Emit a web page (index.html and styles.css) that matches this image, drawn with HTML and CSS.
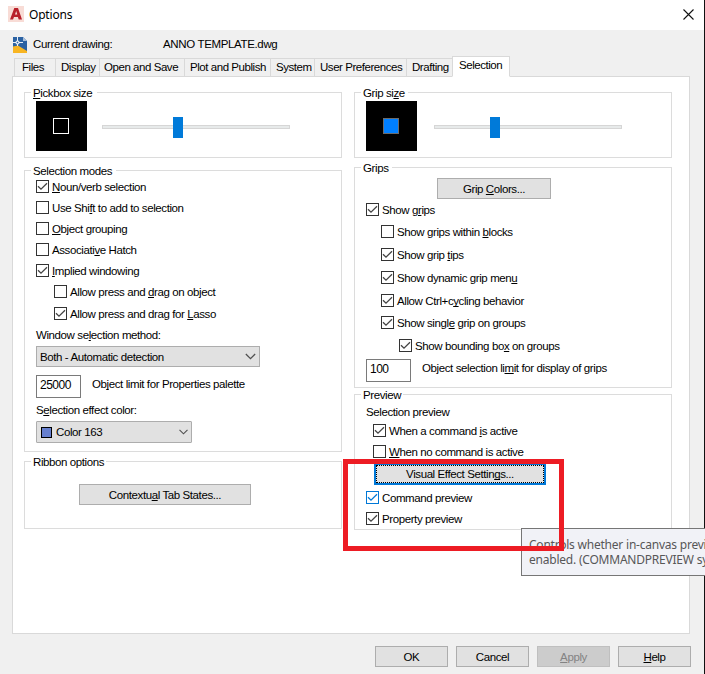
FILE: index.html
```html
<!DOCTYPE html>
<html lang="en">
<head>
<meta charset="utf-8">
<title>Options</title>
<link rel="stylesheet" href="styles.css">
</head>
<body>
<svg class="defs" width="0" height="0"><symbol id="tick" viewBox="0 0 11 11"><path d="M1 5.2 L4 8.2 L10 2.2" fill="none" stroke="currentColor" stroke-width="1.3"/></symbol><symbol id="chev" viewBox="0 0 9 6"><path d="M.5 .8 L4.5 4.8 L8.5 .8" fill="none" stroke="#505050" stroke-width="1.1"/></symbol></svg>
<div class="dialog">
  <header class="title">
    <svg class="app" width="16" height="16" viewBox="0 0 16 16"><rect width="16" height="16" fill="#f8dcd6"/><path d="M2 13.5 L6.3 2 H10 L14 13.5 H10.7 L9.9 11 H6 L5 13.5 Z M7 8.6 H9.3 L8.2 5Z" fill="#b81f2a" fill-rule="evenodd"/></svg>
    <span class="name">Options</span>
    <svg class="close" width="11" height="11" viewBox="0 0 11 11"><path d="M.5 .5 L10.5 10.5 M10.5 .5 L.5 10.5" stroke="#111" stroke-width="1.1"/></svg>
  </header>
  <div class="drawing">
    <svg width="14" height="16" viewBox="0 0 14 16"><path d="M0 0 H10 L14 4 V16 H0Z" fill="#2c62a3"/><path d="M10 0 L14 4 H10Z" fill="#a9c0db"/><path d="M0 9.5 L5 8.5 L14 14 V16 H0Z" fill="#f8b522"/><path d="M0 5.5 H10 M4.5 0 V9" stroke="#fff" stroke-width=".9"/><rect x="3.2" y="4.2" width="2.6" height="2.6" fill="#2c62a3" stroke="#fff" stroke-width=".8"/></svg>
    <span class="cur">Current drawing:</span><span class="file">ANNO TEMPLATE.dwg</span>
  </div>
  <nav class="tabs">
    <span class="tab t1">Files</span><span class="tab t2">Display</span><span class="tab t3">Open and Save</span><span class="tab t4">Plot and Publish</span><span class="tab t5">System</span><span class="tab t6">User Preferences</span><span class="tab t7">Drafting</span><span class="tab on">Selection</span>
  </nav>
  <main class="panel">
    <div class="col">
      <section class="group size">
        <div class="legend l-pick"><u>P</u>ickbox size</div>
        <div class="sizer"><div class="preview"><i class="pick"></i></div><div class="slider"><i class="thumb"></i></div></div>
      </section>
      <section class="group modes">
        <div class="legend l-modes">Selection modes</div>
        <label class="check"><i class="box"><svg><use href="#tick"/></svg></i><span><u>N</u>oun/verb selection</span></label>
        <label class="check"><i class="box"></i><span>Use Shi<u>f</u>t to add to selection</span></label>
        <label class="check"><i class="box"></i><span><u>O</u>bject grouping</span></label>
        <label class="check"><i class="box"></i><span>Associati<u>v</u>e Hatch</span></label>
        <label class="check"><i class="box"><svg><use href="#tick"/></svg></i><span><u>I</u>mplied windowing</span></label>
        <label class="check in18"><i class="box"></i><span>Allow press and <u>d</u>rag on object</span></label>
        <label class="check in18 gap1"><i class="box"><svg><use href="#tick"/></svg></i><span>Allow press and drag for <u>L</u>asso</span></label>
        <div class="text method">Window se<u>l</u>ection method:</div>
        <div class="select wide"><span>Both - Automatic detection</span><svg width="11" height="7"><use href="#chev"/></svg></div>
        <div class="field"><span class="input">25000</span><span class="flabel">Ob<u>j</u>ect limit for Properties palette</span></div>
        <div class="text effect">S<u>e</u>lection effect color:</div>
        <div class="select color"><i class="swatch"></i><span>Color 163</span><svg width="9" height="6"><use href="#chev"/></svg></div>
      </section>
      <section class="group ribbon">
        <div class="legend l-ribbon">Ribbon options</div>
        <div class="button states"><span>Contextu<u>a</u>l Tab States...</span></div>
      </section>
    </div>
    <div class="col">
      <section class="group size">
        <div class="legend l-gsize">Grip si<u>z</u>e</div>
        <div class="sizer right"><div class="preview"><i class="pick grip"></i></div><div class="slider"><i class="thumb"></i></div></div>
      </section>
      <section class="group grips">
        <div class="legend l-grips">Grips</div>
        <div class="button gcolors"><span>Grip <u>C</u>olors...</span></div>
        <label class="check h22"><i class="box"><svg><use href="#tick"/></svg></i><span>Show g<u>r</u>ips</span></label>
        <label class="check in15 h22"><i class="box"></i><span>Show grips within <u>b</u>locks</span></label>
        <label class="check in15 h23"><i class="box"><svg><use href="#tick"/></svg></i><span>Show grip <u>t</u>ips</span></label>
        <label class="check in15 h23"><i class="box"><svg><use href="#tick"/></svg></i><span>Show dynamic grip men<u>u</u></span></label>
        <label class="check in15 h23"><i class="box"><svg><use href="#tick"/></svg></i><span>Allow Ctrl+c<u>y</u>cling behavior</span></label>
        <label class="check in15 h22"><i class="box"><svg><use href="#tick"/></svg></i><span>Show singl<u>e</u> grip on groups</span></label>
        <label class="check in33 h23"><i class="box"><svg><use href="#tick"/></svg></i><span>Show bounding bo<u>x</u> on groups</span></label>
        <div class="field limit"><span class="input">100</span><span class="flabel">Object selection li<u>m</u>it for display of grips</span></div>
      </section>
      <section class="group prev">
        <div class="legend l-prev">Preview</div>
        <div class="text">Selection preview</div>
        <label class="check in7 first"><i class="box"><svg><use href="#tick"/></svg></i><span>When a command <u>i</u>s active</span></label>
        <label class="check in7"><i class="box"></i><span><u>W</u>hen no command is active</span></label>
        <div class="button focus"><span>Visual Effect Settin<u>g</u>s...</span></div>
        <label class="check hot"><i class="box"><svg><use href="#tick"/></svg></i><span>Command preview</span></label>
        <label class="check"><i class="box"><svg><use href="#tick"/></svg></i><span>Property preview</span></label>
      </section>
    </div>
  </main>
  <footer class="actions">
    <div class="button"><span>OK</span></div><div class="button"><span>Cancel</span></div><div class="button off"><span><u>A</u>pply</span></div><div class="button"><span><u>H</u>elp</span></div>
  </footer>
  <div class="tooltip">Controls whether in-canvas previe<br>enabled. (COMMANDPREVIEW sy</div>
  <div class="marker"></div>
</div>
</body>
</html>
```
FILE: styles.css
```css
* { box-sizing: border-box; }
body { margin: 0; overflow: hidden; font: 11.5px/14px "Liberation Sans", Arial, sans-serif; letter-spacing: -.4px; color: #000; }
.defs { position: absolute; }
svg { display: block; flex: none; }
u { text-underline-offset: 1px; text-decoration-thickness: 1px; text-decoration-skip-ink: none; }
.dialog { position: relative; width: 705px; height: 674px; overflow: hidden; background: linear-gradient(#111, #111) right / 1px 100% no-repeat #f0f0f0; white-space: nowrap; }
.title { width: 704px; height: 30px; background: #fff; display: flex; align-items: center; padding: 0 10px 0 8px; }
.title .name { margin-left: 5px; flex: 1; font: 12px/16px "Noto Sans", sans-serif; letter-spacing: -.2px; }
.title .app, .title .close { margin-top: -2px; }
.drawing { height: 26px; padding: 3px 0 0 13px; display: flex; align-items: center; }
.drawing span { margin-top: -2px; letter-spacing: -.35px; }
.drawing .cur { width: 130px; margin-left: 6px; }
.tabs { height: 21px; padding-left: 14px; display: flex; align-items: flex-end; position: relative; letter-spacing: -.45px; }
.tab { height: 19px; border: 1px solid #d9d9d9; border-right: 0; padding: 1px 0 0 5px; }
.t1 { width: 41px; padding-left: 7px; } .t2 { width: 44px; } .t3 { width: 85px; padding-left: 4px; } .t4 { width: 86px; } .t5 { width: 44px; } .t6 { width: 92px; } .t7 { width: 46px; }
.on { width: 58px; height: 21px; background: #fff; border-right: 1px solid #d9d9d9; border-bottom-color: #fff; padding-left: 6px; }
.panel { margin: -1px 0 0 12px; width: 678px; height: 558px; background: #fff; border: 1px solid #d9d9d9; padding: 15px 0 0 11px; display: flex; gap: 12px; }
.col { width: 318px; }
.group { border: 1px solid #dcdcdc; padding-left: 11px; }
.legend { height: 14px; margin: -7px 0 -7px -5px; padding-left: 2px; background: #fff; }
.l-pick { width: 66px; } .l-modes { width: 85px; } .l-ribbon { width: 75px; } .l-gsize { width: 47px; } .l-grips { width: 31px; } .l-prev { width: 42px; }
.size { height: 66px; }
.sizer { display: flex; align-items: center; padding-top: 8px; }
.preview { width: 51px; height: 50px; background: #000; display: flex; align-items: center; padding-left: 17px; }
.pick { width: 16px; height: 16px; border: 1px solid #fff; }
.grip { background: #007fff; border-color: #6b6b6b; }
.slider { width: 188px; height: 4px; margin: 2px 0 0 15px; border: 1px solid #d6d6d6; background: #e7eaea; display: flex; align-items: center; padding-left: 70px; }
.right .slider { margin-left: 17px; padding-left: 55px; }
.thumb { width: 10px; height: 21px; flex: none; background: #007ad9; }
.modes { margin-top: 12px; height: 282px; }
.modes .legend { margin-bottom: -2px; }
.check { display: flex; align-items: center; height: 21px; }
.check span { margin-top: 1px; }
.box { width: 13px; height: 13px; border: 1px solid #333; background: #fff; margin-right: 3px; color: #444; flex: none; }
.box svg { width: 11px; height: 11px; }
.in18 { margin-left: 18px; } .in15 { margin-left: 15px; } .in33 { margin-left: 33px; } .in7 { margin-left: 7px; }
.gap1 { margin-top: 1px; }
.h22 { height: 22px; } .h23 { height: 23px; }
.h22 span { margin-top: -1px; }
.h22 .box { margin-top: -1px; }
.method { margin-top: 4px; }
.select { height: 21px; border: 1px solid #adadad; background: #e1e1e1; display: flex; align-items: center; padding: 0 3px; }
.select span { flex: 1; }
.wide { width: 224px; margin-top: 4px; }
.field { display: flex; margin-top: 8px; }
.input { width: 45px; height: 23px; border: 1px solid #7a7a7a; padding: 2px 0 0 3px; background: #fff; font-size: 12px; letter-spacing: -.5px; }
.flabel { margin: 2px 0 0 11px; }
.effect { margin-top: 5px; }
.color { width: 156px; height: 22px; margin-top: 4px; padding-left: 4px; border-radius: 1px; }
.swatch { width: 11px; height: 11px; border: 1px solid #000; background: #6780cf; margin-right: 4px; }
.ribbon { margin-top: 9px; height: 68px; }
.ribbon .legend { margin-bottom: 15px; }
.button { height: 21px; border: 1px solid #adadad; background: #e1e1e1; display: flex; align-items: center; justify-content: center; }
.states { width: 172px; margin-left: 43px; }
.grips { margin-top: 9px; height: 221px; }
.grips .legend { margin-bottom: 3px; }
.gcolors { width: 114px; margin-left: 71px; }
.limit { margin-top: 2px; }
.prev { margin-top: 6px; height: 136px; }
.prev .legend { margin-bottom: 3px; }
.first { margin-top: 1px; }
.focus { width: 172px; height: 22px; margin: 1px 0 2px 8px; border: 2px solid #0078d7; }
.focus span { flex: 1; text-align: center; outline: 1px dotted #000; outline-offset: -1px; height: 18px; line-height: 19px; }
.hot .box { border-color: #0078d7; color: #0078d7; }
.actions { display: flex; gap: 8px; padding: 12px 0 0 375px; }
.actions .button { width: 73px; }
.actions .off { background: #ccc; border-color: #bfbfbf; color: #838383; }
.tooltip { position: absolute; left: 521px; top: 528px; width: 220px; height: 48px; padding: 8px 7px; border: 1px solid #767676; background: #f1f2f7; color: #575757; font: 12px/15px "Noto Sans", sans-serif; letter-spacing: -.22px; }
.marker { position: absolute; left: 343px; top: 459px; width: 221px; height: 92px; border: 5px solid #ed1c24; }
```
